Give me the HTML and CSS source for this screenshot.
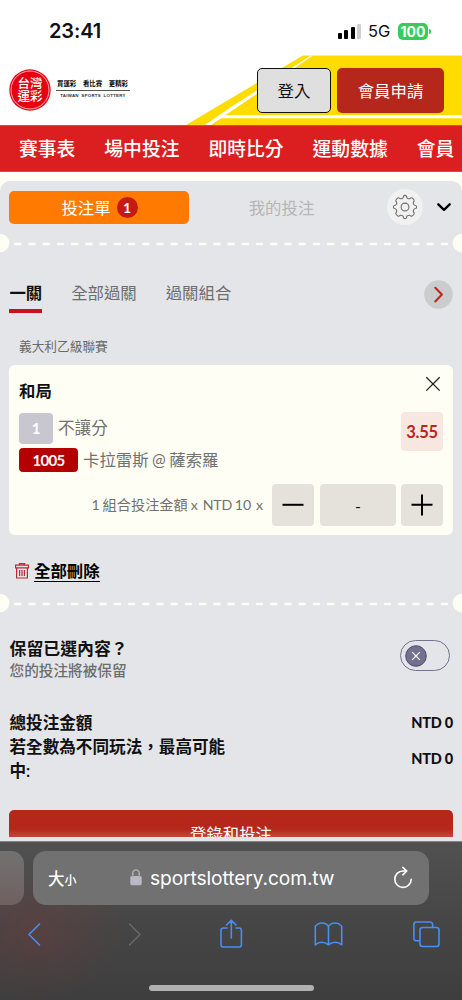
FILE: index.html
```html
<!DOCTYPE html>
<html lang="zh-Hant">
<head>
<meta charset="utf-8">
<meta name="viewport" content="width=device-width">
<title>台灣運彩</title>
<link rel="stylesheet" href="styles.css">
</head>
<body>
<div class="phone">
  <div class="status">
    <span class="clock">23:41</span>
    <span class="signal"><i class="bar b1"></i><i class="bar b2"></i><i class="bar b3"></i><i class="bar b4"></i></span>
    <span class="network">5G</span>
    <span class="battery">100</span><i class="battery-tip"></i>
  </div>

  <header class="header">
    <svg class="stripes" width="462" height="70" viewBox="0 0 462 70">
      <path fill="#ffdc00" d="M303 .5H462V70H186z"/>
      <path fill="#fff" d="M311 .5h2L211 70h-6L231 52z"/>
      <path fill="#fff" d="M222 60H462v3.3H218z"/>
    </svg>
    <div class="logo">
      <svg class="seal" width="42" height="42" viewBox="0 0 42 42">
        <circle cx="21" cy="21" r="20.7" fill="#e60012"/>
        <circle cx="21" cy="21" r="19" fill="none" stroke="#fff" stroke-width=".7"/>
        <text x="21" y="19.3" class="seal-text">台灣</text>
        <text x="21" y="32" class="seal-text">運彩</text>
      </svg>
      <div class="tagline">
        <div class="slogan"><span>買運彩</span><span>看比賽</span><span>更精彩</span></div>
        <div class="brand">TAIWAN SPORTS LOTTERY</div>
      </div>
    </div>
    <button class="btn login">登入</button>
    <button class="btn join">會員申請</button>
  </header>

  <nav class="nav"><span>賽事表</span><span>場中投注</span><span>即時比分</span><span>運動數據</span><span>會員</span></nav>

  <main class="page">
    <section class="slip">
      <div class="tabs">
        <div class="tab active">投注單<b class="count">1</b></div>
        <div class="tab">我的投注</div>
        <div class="gear">
          <svg width="26" height="26" viewBox="0 0 26 26" fill="none" stroke="#707070" stroke-width="1.1" stroke-linejoin="round">
            <path d="M10.6 4.2Q11.3 3.8 11.5 2.4Q11.7 1.4 13 1.4T14.5 2.4Q14.7 3.8 15.4 4.2Q16.8 5 17.6 4.7L18.9 3.9Q19.8 3.4 21.2 4.8T22.1 7.1L21.3 8.4Q21 9.2 21.8 10.6Q22.2 11.3 23.6 11.5Q24.6 11.7 24.6 13T23.6 14.5Q22.2 14.7 21.8 15.4Q21 16.8 21.3 17.6L22.1 18.9Q22.6 19.8 21.2 21.2T18.9 22.1L17.6 21.3Q16.8 21 15.4 21.8Q14.7 22.2 14.5 23.6Q14.3 24.6 13 24.6T11.5 23.6Q11.3 22.2 10.6 21.8Q9.2 21 8.4 21.3L7.1 22.1Q6.2 22.6 4.8 21.2T3.9 18.9L4.7 17.6Q5 16.8 4.2 15.4Q3.8 14.7 2.4 14.5Q1.4 14.3 1.4 13T2.4 11.5Q3.8 11.3 4.2 10.6Q5 9.2 4.7 8.4L3.9 7.1Q3.4 6.2 4.8 4.8T7.1 3.9L8.4 4.7Q9.2 5 10.6 4.2z"/>
            <circle cx="13" cy="13" r="3.9"/>
          </svg>
        </div>
        <svg class="caret" width="14" height="9" viewBox="0 0 14 9"><path d="M1.3 1.3 7 6.8l5.7-5.5" fill="none" stroke="#000" stroke-width="2.3" stroke-linecap="round" stroke-linejoin="round"/></svg>
      </div>

      <div class="perforation"><svg width="462" height="20"><circle cx="0" cy="10" r="9.3"/><circle cx="462" cy="10" r="9.3"/><path d="M14.2 11H449"/></svg></div>

      <div class="modes">
        <span class="mode on">一關</span><span class="mode">全部過關</span><span class="mode">過關組合</span>
        <svg class="next" width="29" height="29" viewBox="0 0 29 29"><circle cx="14.5" cy="14.5" r="14.3" fill="#cbcccd"/><path d="m11.3 7.8 6.6 6.7-6.6 7" fill="none" stroke="#c0271d" stroke-width="2.1" stroke-linecap="round" stroke-linejoin="round"/></svg>
      </div>

      <div class="league">義大利乙級聯賽</div>

      <article class="card">
        <div class="pick"><h2>和局</h2>
          <svg width="16" height="16" viewBox="0 0 16 16"><path d="m1.3 1.2 13.4 13.4m0-13.4L1.3 14.6" stroke="#222" stroke-width="1.3"/></svg>
        </div>
        <div class="bet">
          <div class="details">
            <div class="line"><b class="tag one">1</b><span>不讓分</span></div>
            <div class="line second"><b class="tag code">1005</b><span class="match">卡拉雷斯 @ 薩索羅</span></div>
          </div>
          <b class="odds">3.55</b>
        </div>
        <div class="stake">
          <span class="formula"><span>1 組合投注金額 x</span><span class="unit">NTD 10</span><span>x</span></span>
          <button class="step"><svg width="22" height="22"><path d="M.5 10.8h21"/></svg></button>
          <span class="amount">-</span>
          <button class="step plus"><svg width="22" height="22"><path d="M.5 10.8h21M11 .5v21"/></svg></button>
        </div>
      </article>

      <div class="clear">
        <svg width="14" height="16" viewBox="0 0 14 16" fill="none" stroke="#bd2931" stroke-width="1.2"><path d="M.5 2.2h13v2.6H.5zM4.4 2V.7h5.2V2M1.6 5v10h10.8V5M4.6 7v6M7 7v6M9.4 7v6"/></svg>
        <span>全部刪除</span>
      </div>

      <div class="perforation lower"><svg width="462" height="20"><circle cx="0" cy="10" r="9.3"/><circle cx="462" cy="10" r="9.3"/><path d="M14.2 11H449"/></svg></div>

      <div class="keep">
        <div><div class="strong">保留已選內容？</div><div class="hint">您的投注將被保留</div></div>
        <div class="toggle"><svg width="22" height="22" viewBox="0 0 22 22"><circle cx="11" cy="11" r="10.3" fill="#71708f" stroke="#4d4b70" stroke-width="1"/><path d="m7.2 7.2 7.6 7.6m0-7.6-7.6 7.6" stroke="#fff" stroke-width="1.2"/></svg></div>
      </div>

      <div class="totals">
        <div class="row"><span>總投注金額</span><b>NTD 0</b></div>
        <div class="row"><span>若全數為不同玩法，最高可能中:</span><b>NTD 0</b></div>
      </div>

      <div class="submit">登錄和投注</div>
    </section>
  </main>

  <footer class="browser">
    <div class="address-row">
      <div class="prev-tab"></div>
      <div class="address">
        <span class="size">大<small>小</small></span>
        <svg class="lock" width="12" height="17" viewBox="0 0 12 17"><rect x=".3" y="7" width="11.4" height="9.2" rx="1.6" fill="#bab8c2"/><path d="M2.7 8V4.6a3.3 3.6 0 0 1 6.6 0V8" fill="none" stroke="#aaa9ae" stroke-width="1.6"/></svg>
        <span class="url">sportslottery.com.tw</span>
        <svg class="reload" width="20" height="23" viewBox="0 0 20 23" fill="none" stroke="#fff" stroke-width="1.6" stroke-linecap="round" stroke-linejoin="round"><path d="M18.2 13.2A8.2 8.2 0 1 1 10 5h3.7M9.8 1.3l4 3.7-4 3.8"/></svg>
      </div>
    </div>
    <div class="tools">
      <svg width="462" height="32" viewBox="0 0 462 32" fill="none" stroke="#478ef5" stroke-width="1.6" stroke-linecap="round" stroke-linejoin="round">
        <path d="M39.5 6 29 16.5 39.5 27"/>
        <path d="M129.5 6 140 16.5 129.5 27" stroke="#686868"/>
        <path d="M227 10h-3.8a2.2 2.2 0 0 0-2.2 2.2v14.6a2.2 2.2 0 0 0 2.2 2.2h16a2.2 2.2 0 0 0 2.2-2.2V12.2a2.2 2.2 0 0 0-2.2-2.2H236M231.3 20V2.3M226.5 7l4.8-4.8L236 7"/>
        <path d="M328.5 26.8c-4.2-3.2-9.4-3.2-13.2 0V8.4c3.2-4.6 10.4-4.6 13.2 0 2.8-4.6 10-4.6 13.2 0v18.4c-3.8-3.2-9-3.2-13.2 0zM328.5 8.4v18.4"/>
        <path d="M419.6 22.8h-3.2a2.5 2.5 0 0 1-2.5-2.5V6.5A2.5 2.5 0 0 1 416.4 4h13.7a2.5 2.5 0 0 1 2.5 2.5V9.4"/>
        <rect x="420" y="9.5" width="19" height="19" rx="2.5"/>
      </svg>
    </div>
    <div class="home"></div>
  </footer>
</div>
</body>
</html>
```
FILE: styles.css
```css
* { box-sizing: border-box; }
body { margin: 0; font-family: Lato, "Noto Sans CJK TC", sans-serif; color: #111; background: #fff; }
button { border: 0; padding: 0; font-family: inherit; }
svg { display: block; flex: none; }
.phone { width: 462px; height: 1000px; overflow: hidden; display: flex; flex-direction: column; }

.status { height: 55px; flex: none; display: flex; align-items: center; padding: 7px 0 0 49px; font-family: Inter, sans-serif; }
.clock { width: 289px; font-size: 20px; font-weight: 600; letter-spacing: -.1px; line-height: 24px; }
.signal { display: flex; align-items: flex-end; gap: 2.4px; height: 15px; width: 30px; }
.bar { width: 4px; border-radius: 1px; background: #000; }
.b1 { height: 6px; } .b2 { height: 8.5px; } .b3 { height: 11.5px; } .b4 { height: 15px; background: #cfcfcf; }
.network { width: 30px; font-size: 16.5px; font-weight: 400; }
.battery { width: 30px; height: 17px; border-radius: 5px; background: #36cc59; color: #fff; font-size: 14px; font-weight: 700; line-height: 17px; text-align: center; }
.battery-tip { width: 2px; height: 5px; margin-left: 1px; border-radius: 0 2px 2px 0; background: #36cc59; }

.header { position: relative; height: 70px; flex: none; display: flex; align-items: flex-start; padding: 13px 18px 0 9px; }
.stripes { position: absolute; inset: 0; }
.logo { position: relative; display: flex; width: 248px; padding-top: 1px; }
.seal-text { fill: #fff; font: 500 12.5px "Noto Sans CJK TC", sans-serif; text-anchor: middle; }
.tagline { width: 74px; margin-left: 5px; padding-top: 11px; }
.slogan { display: flex; justify-content: space-between; padding: 0 2px 2px 1px; border-bottom: 1px solid #555; font-size: 6.4px; line-height: 8px; font-weight: 700; color: #000; }
.brand { padding-top: 2px; font: 700 4.4px/6px "Liberation Sans", sans-serif; color: #333; text-align: center; letter-spacing: .28px; word-spacing: 1px; white-space: nowrap; }
.btn { position: relative; height: 45px; border-radius: 5px; font-size: 16.4px; line-height: 43px; }
.login { width: 74px; background: #dfdfdf; border: 1px solid #111; color: #111; }
.join { width: 107px; margin-left: 6px; background: #b5271b; color: #fff; }

.nav { height: 47px; flex: none; display: flex; gap: 29px; padding-left: 19px; background: #db1e20; border-top: 1px solid #d8521c; border-bottom: 1px solid #e34a42; color: #fff; font-size: 18.8px; font-weight: 500; line-height: 45px; white-space: nowrap; }

.page { height: 669px; flex: none; padding-top: 9px; background: #fffef5; }
.slip { height: 660px; display: flex; flex-direction: column; background: #e4e5e8; border-radius: 10px 10px 0 0; overflow: hidden; }
.tabs { height: 52px; flex: none; display: flex; align-items: center; padding: 0 11px 0 9px; }
.tab { width: 180px; height: 33px; display: flex; align-items: center; justify-content: center; padding-left: 1px; font-size: 16.4px; color: #b4b5b7; border-radius: 5px; }
.tab.active { background: #ff7a00; color: #fff; }
.tab + .tab { width: 185px; padding: 0; }
.count { width: 21px; height: 21px; margin-left: 6px; border-radius: 50%; background: #c31a12; font-size: 14px; line-height: 21px; text-align: center; }
.gear { width: 36px; height: 36px; margin-left: 13px; display: grid; place-items: center; border-radius: 50%; background: #f1f1f1; }
.caret { margin-left: 14px; }
.perforation { height: 20px; flex: none; fill: #fffef5; stroke: none; }
.perforation path { stroke: #fffef5; stroke-width: 2.6; stroke-dasharray: 7.2 7.02; }

.modes { height: 60px; margin-top: 18px; flex: none; display: flex; gap: 29px; padding: 9px 9px 0 9.4px; font-size: 16.4px; line-height: 26px; color: #6d6d70; }
.mode { height: 33px; }
.on { height: 33px; border-bottom: 4px solid #c5141b; font-weight: 700; color: #111; }
.next { margin: 0 0 0 auto; }
.league { height: 34px; flex: none; padding-left: 19px; font-size: 12.7px; line-height: 30px; color: #69696b; }

.card { height: 170px; margin: 0 9px; flex: none; padding: 11px 10px 0; background: #fffef5; border-radius: 6px; }
.pick { display: flex; justify-content: space-between; padding-right: 2px; height: 36px; }
h2 { margin: 0; font-size: 16.4px; line-height: 29px; }
.bet { display: flex; justify-content: space-between; height: 72px; }
.line { height: 32px; display: flex; align-items: center; gap: 5px; font-size: 16.6px; line-height: 30px; color: #71716f; }
.match { font-size: 16.4px; word-spacing: -.7px; }
.tag { border-radius: 4px; color: #fff; text-align: center; font-size: 16px; }
.one { width: 34px; height: 31px; line-height: 31px; background: #c8c7cf; font-size: 15px; }
.code { width: 59px; height: 24px; line-height: 24px; background: #b50000; font-size: 15px; letter-spacing: -.7px; }
.odds { width: 42px; height: 39px; border-radius: 4px; background: #f8e7e0; color: #bb261b; font-size: 16.5px; line-height: 40px; letter-spacing: -.3px; text-align: center; }
.stake { display: flex; align-items: center; justify-content: flex-end; }
.formula { display: flex; align-items: baseline; gap: 5px; font-size: 14.2px; line-height: 20px; color: #71716f; margin: -1px 9px 0 0; white-space: pre; word-spacing: -.7px; }
.unit { letter-spacing: -.2px; }
.step, .amount { width: 42px; height: 42px; border-radius: 4px; background: #e5e2dc; display: grid; place-items: center; }
.step path { stroke: #000; stroke-width: 2; }
.amount { width: 76px; margin: 0 5px 0 6px; font-size: 16px; }

.clear { height: 57px; flex: none; display: flex; align-items: center; gap: 5px; padding: 14px 0 0 15px; font-size: 16.4px; font-weight: 700; line-height: 24px; color: #000; }
.clear span { border-bottom: 1px solid #000; height: 22px; line-height: 22px; }
.perforation.lower { margin-top: 1px; }
.keep { height: 98px; flex: none; display: flex; justify-content: space-between; padding: 24px 12px 0 9.5px; }
.strong { font-size: 16.9px; line-height: 24px; font-weight: 600; }
.hint { font-size: 14.65px; line-height: 20px; color: #6d6d70; font-weight: 500; }
.toggle { width: 50px; height: 31px; margin-top: 3px; padding: 3.5px; border: 1.5px solid #73728f; border-radius: 16px; }
.totals { height: 99px; flex: none; padding: 0 9px 0 9.5px; font-size: 16.6px; line-height: 24px; font-weight: 600; }
.row { display: flex; justify-content: space-between; align-items: center; }
.row span { width: 232px; }
.row b { font-size: 14.5px; letter-spacing: -.2px; }
.submit { height: 27px; flex: none; margin: 0 9px; overflow: hidden; border-radius: 5px 5px 0 0; background: linear-gradient(#b5271b 70%, #be483e); color: #fff; font-size: 16.4px; line-height: 47px; text-align: center; }

.browser { height: 159px; flex: none; padding-top: 9px; background: radial-gradient(ellipse 90px 70px at 35px 90px, #8b333344, transparent), linear-gradient(#515151, #454545 55%, #3e3e3e); border-top: 1px solid #858585; }
.address-row { display: flex; gap: 9px; height: 54px; }
.prev-tab { width: 24px; border-radius: 0 13px 13px 0; background: linear-gradient(#727272, #70605f); }
.address { width: 396px; display: flex; align-items: center; border-radius: 13px; padding: 0 16px 0 15px; background: #717171; color: #fff; font-family: Inter, "Noto Sans CJK TC", sans-serif; }
.size { width: 82px; font-size: 16.5px; font-weight: 500; }
.size small { font-size: 12px; }
.lock { margin-bottom: 2px; }
.url { margin-left: 8px; font-size: 19.2px; letter-spacing: -.1px; }
.reload { margin: 0 0 2px auto; }
.tools { height: 79.5px; padding-top: 13px; }
.home { width: 165px; height: 6px; margin: 0 auto; border-radius: 3px; background: #b1b1b1; }
```
